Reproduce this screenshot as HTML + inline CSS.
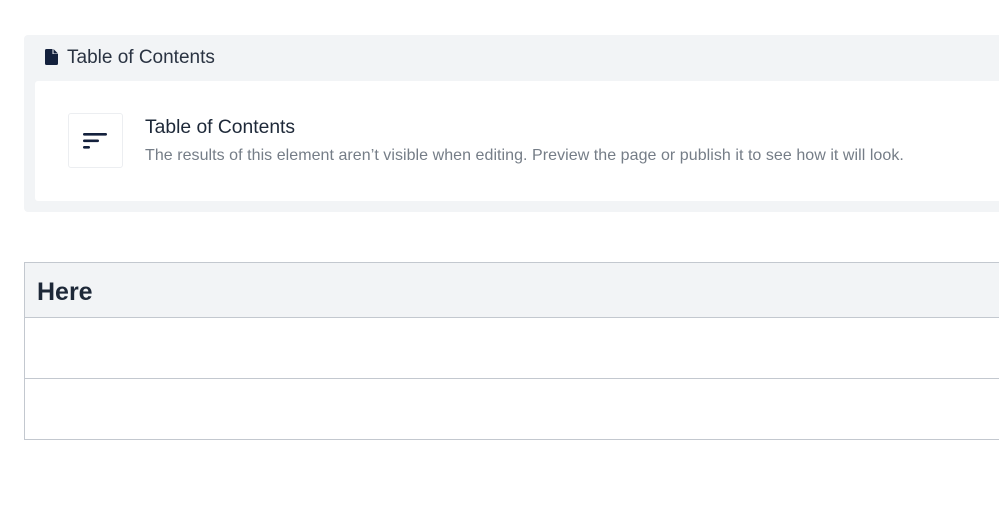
<!DOCTYPE html>
<html><head><style>
body{margin:0;width:999px;height:509px;background:#fff;font-family:"Liberation Sans",sans-serif;overflow:hidden;position:relative}
.panel{position:absolute;left:24px;top:35px;width:990px;height:177px;background:#f2f4f6;border-radius:4px}
.ptitle{position:absolute;left:67px;top:47px;font-size:19px;color:#2a3342}
.card{position:absolute;left:35px;top:81px;width:980px;height:120px;background:#fff;border-radius:3px}
.ib{position:absolute;left:68px;top:113px;width:53px;height:53px;border:1px solid #eceef1;border-radius:3px;background:#fff}
.t1{position:absolute;left:145px;top:117px;font-size:19.3px;color:#1d2838}
.t2{position:absolute;left:145px;top:147px;font-size:16px;color:#757d87;letter-spacing:0.05px}
table{position:absolute;left:24px;top:262px;width:990px;border-collapse:collapse;border:1px solid #c3c8cf}
td{border:1px solid #c3c8cf;padding:0 12px}
</style></head><body>
<div class="panel"></div>
<svg style="position:absolute;left:45px;top:49px" width="13" height="16" viewBox="0 0 13 16"><path d="M0 1.5Q0 0 1.5 0H7.5V5H13V14.5Q13 16 11.5 16H1.5Q0 16 0 14.5Z M8.5 0L13 4.5H8.5Z" fill="#14213d"/></svg>
<div class="ptitle">Table of Contents</div>
<div class="card"></div>
<div class="ib"><svg style="position:absolute;left:14px;top:19px" width="26" height="20"><rect x="0" y="0" width="24" height="2.6" rx="1.3" fill="#14213d"/><rect x="0" y="6.5" width="16" height="2.6" rx="1.3" fill="#14213d"/><rect x="0" y="13" width="7" height="2.6" rx="1.3" fill="#14213d"/></svg></div>
<div class="t1">Table of Contents</div>
<div class="t2">The results of this element aren’t visible when editing. Preview the page or publish it to see how it will look.</div>
<table>
<tr><td style="height:50px;background:#f2f4f6;font-weight:bold;font-size:25px;color:#1d2838;padding-top:4px">Here</td></tr>
<tr><td style="height:60px"></td></tr>
<tr><td style="height:60px"></td></tr>
</table>
</body></html>
